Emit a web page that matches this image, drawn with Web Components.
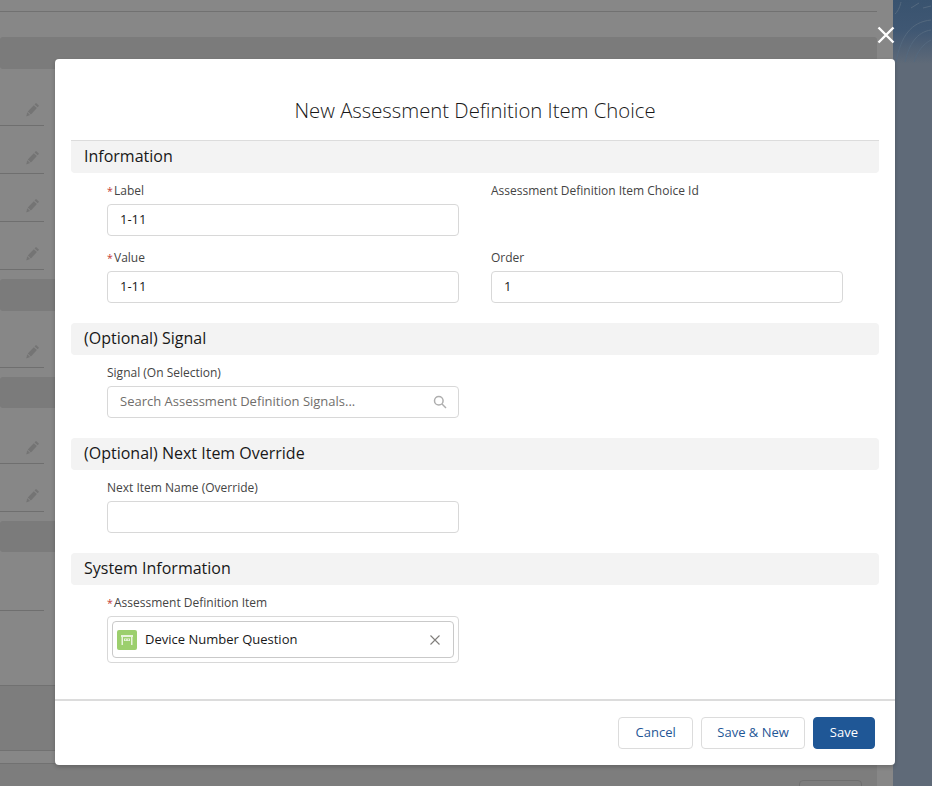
<!DOCTYPE html>
<html>
<head>
<meta charset="utf-8">
<title>New Assessment Definition Item Choice</title>
<style>
  html, body { margin: 0; height: 100%; overflow: hidden; }
  body { font-family: "Open Sans", "Noto Sans", sans-serif; color: #181818; }
</style>
</head>
<body>
<page-backdrop></page-backdrop>

<record-modal heading="New Assessment Definition Item Choice">
  <form-section title="Information" ruled style="--gap-after:20px">
    <form-field required label="Label"><text-box value="1-11"></text-box></form-field>
    <form-field label="Assessment Definition Item Choice Id"></form-field>
    <form-field required label="Value"><text-box value="1-11"></text-box></form-field>
    <form-field label="Order"><text-box value="1"></text-box></form-field>
  </form-section>
  <form-section title="(Optional) Signal" style="--gap-after:20px">
    <form-field label="Signal (On Selection)"><text-box placeholder="Search Assessment Definition Signals..." search></text-box></form-field>
  </form-section>
  <form-section title="(Optional) Next Item Override" style="--gap-after:20px">
    <form-field label="Next Item Name (Override)"><text-box></text-box></form-field>
  </form-section>
  <form-section title="System Information">
    <form-field required label="Assessment Definition Item"><record-pill name="Device Number Question"></record-pill></form-field>
  </form-section>
  <modal-button slot="footer" style="--pad:16.5px">Cancel</modal-button>
  <modal-button slot="footer" style="--pad:15px">Save &amp; New</modal-button>
  <modal-button slot="footer" brand>Save</modal-button>
</record-modal>

<script>
// Dimmed record page behind the modal
class PageBackdrop extends HTMLElement {
  constructor() {
    super();
    this.attachShadow({ mode: 'open' });
  }

  connectedCallback() {
    const pencil = `<svg width="14" height="16" viewBox="0 0 14 16"><path fill="#747474" d="M10.300 1.200l2.500 2.300c.2.200.2.400 0 .6L11.700 5.300 8.600 2.500 9.700 1.200c.2-.2.400-.2.600 0zM7.800 3.300l3.100 2.800-6 6.300-3.100-2.900zM1.200 10.300l2.900 2.700-3.300 1.300c-.3.100-.5-.1-.4-.4z"/></svg>`;
    const rows = [
      ['plain', 12, true], ['plain', 25], ['head', 32],
      ['field', 57, pencil], ['field', 48, pencil], ['field', 48, pencil], ['field', 48, pencil],
      ['plain', 9], ['head', 32],
      ['field', 57, pencil], ['plain', 9], ['head', 31],
      ['field', 56, pencil], ['field', 48, pencil], ['plain', 9], ['head', 31],
      ['field', 59], ['plain', 75, true], ['dark', 65, true], ['plain', 13, true], ['dark', 22]
    ];
    const html = rows.map(([kind, h, extra]) => {
      const icon = typeof extra === 'string' ? extra : '';
      return `<div class="row ${kind} ${extra === true ? 'line' : ''}" style="height:${h}px">${icon}</div>`;
    }).join('');
    this.shadowRoot.innerHTML = `
      <style>
        :host { display: flex; width: 932px; height: 786px; background: #5f6a78; }
        .main { width: 893px; flex: none; position: relative; background: #878787; }
        .side { flex: 1; }
        .banner { height: 64px; background: linear-gradient(#39536f 0, #3f5773 30px, #5f6a78 64px); overflow: hidden; }
        .banner svg { display: block; }
        .rows { width: 877px; height: 786px; }
        .row { box-sizing: border-box; }
        .head { background: #7b7b7b; border-radius: 3px; }
        .dark { background: #7d7d7d; }
        .row.field { width: 44px; display: flex; justify-content: flex-end; align-items: flex-end; padding: 0 4px 7px 0; border-bottom: 1px solid #6f6f6f; }
        .line { border-bottom: 1px solid #717171; }
        .ghost { position: absolute; left: 799px; top: 780px; width: 61px; height: 20px; border: 1px solid #6f6f6f; border-radius: 4px; }
      </style>
      <div class="main">
        <div class="rows">${html}</div>
        <div class="ghost"></div>
      </div>
      <div class="side">
        <div class="banner">
          <svg width="39" height="64" fill="none" stroke="#54697f" stroke-width="1"><path d="M3 62C8 36 18 22 38 20M12 62C16 44 24 32 38 30M21 62C24 52 30 44 38 40M2 14C6 10 7 6 8 2M18 8l8-5M30 8l8-2"/></svg>
        </div>
      </div>
    `;
  }
}
customElements.define('page-backdrop', PageBackdrop);

class RecordModal extends HTMLElement {
  constructor() {
    super();
    this.attachShadow({ mode: 'open' });
  }

  connectedCallback() {
    this.shadowRoot.innerHTML = `
      <style>
        :host { position: absolute; left: 55px; top: 59px; width: 840px; height: 706px; display: flex; flex-direction: column; background: #fff; border-radius: 4px; box-shadow: 0 2px 4px rgba(0,0,0,.2); }
        .close { position: absolute; left: 822px; top: -33px; width: 18px; height: 18px; }
        h2 { margin: 0; height: 81px; box-sizing: border-box; padding-top: 37px; text-align: center; font-weight: 300; font-size: 20.3px; line-height: 28px; color: #181818; }
        .body { flex: 1; padding: 0 16px; border-bottom: 2px solid #dcdcdc; }
        footer { height: 64px; display: flex; justify-content: flex-end; gap: 8px; padding: 16px 20px 0 0; box-sizing: border-box; }
      </style>
      <svg class="close" viewBox="0 0 18 18"><path d="M1.500 1.500l15 15M16.500 1.500l-15 15" stroke="#fff" stroke-width="2.400" fill="none"/></svg>
      <h2>${this.getAttribute('heading')}</h2>
      <div class="body"><slot></slot></div>
      <footer><slot name="footer"></slot></footer>
    `;
  }
}
customElements.define('record-modal', RecordModal);

class FormSection extends HTMLElement {
  constructor() {
    super();
    this.attachShadow({ mode: 'open' });
  }

  connectedCallback() {
    const ruled = this.hasAttribute('ruled') ? 'ruled' : '';
    this.shadowRoot.innerHTML = `
      <style>
        :host { display: block; margin-bottom: var(--gap-after, 0); }
        h3 { margin: 0; height: 32px; box-sizing: border-box; padding-left: 13px; background: #f3f3f3; border-radius: 4px; font-weight: 400; font-size: 16px; line-height: 30px; color: #181818; }
        h3.ruled { height: 33px; border-top: 1px solid #dcdcdc; border-radius: 0 0 4px 4px; }
        .grid { display: grid; grid-template-columns: 352px 352px; column-gap: 32px; row-gap: 12px; padding: 8px 36px 0; }
      </style>
      <h3 class="${ruled}">${this.getAttribute('title')}</h3>
      <div class="grid"><slot></slot></div>
    `;
  }
}
customElements.define('form-section', FormSection);

class FormField extends HTMLElement {
  constructor() {
    super();
    this.attachShadow({ mode: 'open' });
  }

  connectedCallback() {
    const star = this.hasAttribute('required') ? '<abbr>*</abbr>' : '';
    this.shadowRoot.innerHTML = `
      <style>
        :host { display: block; min-height: 55px; }
        label { display: block; height: 23px; font-size: 12px; line-height: 20px; color: #444; }
        abbr { display: inline-block; width: 7px; font-size: 10.500px; color: #c23934; }
      </style>
      <label>${star}${this.getAttribute('label')}</label>
      <slot></slot>
    `;
  }
}
customElements.define('form-field', FormField);

class TextBox extends HTMLElement {
  constructor() {
    super();
    this.attachShadow({ mode: 'open' });
  }

  connectedCallback() {
    const value = this.getAttribute('value');
    const placeholder = this.getAttribute('placeholder');
    const icon = this.hasAttribute('search')
      ? '<svg width="14" height="14" viewBox="0 0 14 14" fill="none" stroke="#aeaeae" stroke-width="1.500"><circle cx="5.800" cy="5.800" r="4.300"/><path d="M9 9l4 4"/></svg>'
      : '';
    this.shadowRoot.innerHTML = `
      <style>
        :host { display: flex; align-items: center; justify-content: space-between; height: 32px; box-sizing: border-box; padding: 0 11px 0 12px; background: #fff; border: 1px solid #d8d8d8; border-radius: 4px; font-size: 13px; color: #181818; }
        span { padding-bottom: 2px; }
        .ph { color: #706e6b; }
      </style>
      ${value ? `<span>${value}</span>` : ''}${placeholder ? `<span class="ph">${placeholder}</span>` : ''}${icon}
    `;
  }
}
customElements.define('text-box', TextBox);

class RecordPill extends HTMLElement {
  constructor() {
    super();
    this.attachShadow({ mode: 'open' });
  }

  connectedCallback() {
    this.shadowRoot.innerHTML = `
      <style>
        :host { display: block; height: 47px; box-sizing: border-box; padding: 4px; border: 1px solid #d8d8d8; border-radius: 4px; }
        .pill { display: flex; align-items: center; height: 37px; box-sizing: border-box; padding: 0 12px 0 4px; border: 1px solid #c9c9c9; border-radius: 4px; font-size: 13px; color: #181818; }
        .icon { width: 20px; height: 20px; border-radius: 2px; background: #9ccf6d; margin-right: 8px; display: block; }
        span { flex: 1; line-height: 16px; padding-bottom: 2px; }
      </style>
      <div class="pill">
        <svg class="icon" viewBox="0 0 20 20"><path fill="#e8f3dc" d="M4 5h12v2H4zM4.500 7h1.500v8H4.500zM14 7h1.500v8H14z"/><path fill="#e8f3dc" d="M7 8.500h6v2.500H7z"/><path fill="#9ccf6d" d="M8 9.300h1.200v1H8zM10.800 9.300H12v1h-1.200z"/></svg>
        <span>${this.getAttribute('name')}</span>
        <svg width="12" height="12" viewBox="0 0 12 12"><path d="M1.500 1.500l9 9M10.500 1.500l-9 9" stroke="#807e7b" stroke-width="1.100" fill="none"/></svg>
      </div>
    `;
  }
}
customElements.define('record-pill', RecordPill);

class ModalButton extends HTMLElement {
  constructor() {
    super();
    this.attachShadow({ mode: 'open' });
  }

  connectedCallback() {
    this.shadowRoot.innerHTML = `
      <style>
        :host { display: inline-flex; align-items: center; height: 32px; box-sizing: border-box; padding: 0 var(--pad, 16px) 2px; background: #fff; border: 1px solid #dcdcdc; border-radius: 4px; font-size: 13px; color: #1f5796; }
        :host([brand]) { background: #1f5796; border-color: #1f5796; color: #fff; }
      </style>
      <slot></slot>
    `;
  }
}
customElements.define('modal-button', ModalButton);
</script>
</body>
</html>
